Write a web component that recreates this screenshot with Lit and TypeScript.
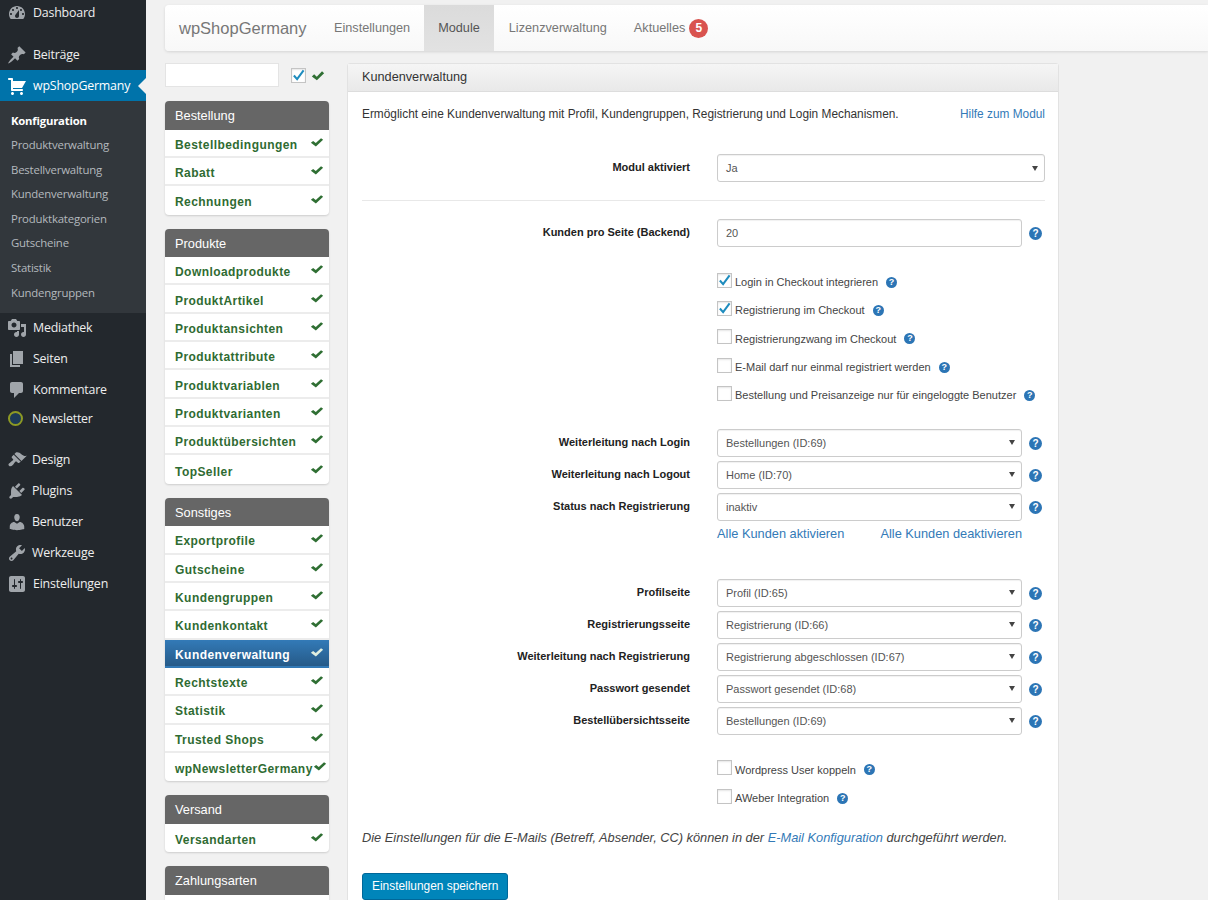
import { LitElement, html, css, svg } from 'lit';
import { customElement } from 'lit/decorators.js';

const ICONS: Record<string, string> = {
  dashboard:
    'M3.76 16h12.48c1.1-1.37 1.76-3.11 1.76-5 0-4.42-3.58-8-8-8s-8 3.58-8 8c0 1.89.66 3.63 1.76 5zM10 4c.55 0 1 .45 1 1s-.45 1-1 1-1-.45-1-1 .45-1 1-1zM6 6c.55 0 1 .45 1 1s-.45 1-1 1-1-.45-1-1 .45-1 1-1zm8 0c.55 0 1 .45 1 1s-.45 1-1 1-1-.45-1-1 .45-1 1-1zm-5.37 5.55L12 7v6c0 1.1-.9 2-2 2s-2-.9-2-2c0-.57.24-1.08.63-1.45zM4 10c.55 0 1 .45 1 1s-.45 1-1 1-1-.45-1-1 .45-1 1-1zm12 0c.55 0 1 .45 1 1s-.45 1-1 1-1-.45-1-1 .45-1 1-1z',
  pin: 'M10.44 3.02l1.82-1.82 6.36 6.35-1.83 1.82c-1.05-.68-2.48-.57-3.41.36l-.75.75c-.92.93-1.04 2.35-.35 3.41l-1.83 1.82-2.41-2.41-2.8 2.79c-.42.42-3.38 2.71-3.8 2.29s1.86-3.39 2.28-3.81l2.79-2.79L4.1 9.36l1.83-1.82c1.05.69 2.48.57 3.4-.36l.75-.75c.93-.92 1.05-2.35.36-3.41z',
  cart: 'M6 13h9c.55 0 1 .45 1 1s-.45 1-1 1H5c-.55 0-1-.45-1-1V4H2c-.55 0-1-.45-1-1s.45-1 1-1h3c.55 0 1 .45 1 1v2h13l-4 7H6v1zm-.5 3c.83 0 1.5.67 1.5 1.5S6.33 19 5.5 19 4 18.33 4 17.5 4.67 16 5.5 16zm9 0c.83 0 1.5.67 1.5 1.5s-.67 1.5-1.5 1.5-1.5-.67-1.5-1.5.67-1.5 1.5-1.5z',
  media:
    'M13 11V4c0-.55-.45-1-1-1h-1.67L9 1H5L3.67 3H2c-.55 0-1 .45-1 1v7c0 .55.45 1 1 1h10c.55 0 1-.45 1-1zM7 4.5c1.38 0 2.5 1.12 2.5 2.5S8.38 9.5 7 9.5 4.5 8.38 4.5 7 5.62 4.5 7 4.5zM14 6h5v10.5c0 1.38-1.12 2.5-2.5 2.5S14 17.88 14 16.5s1.12-2.5 2.5-2.5c.17 0 .34.02.5.05V9h-3V6zm-4 8.05V13h2v3.5c0 1.38-1.12 2.5-2.5 2.5S7 17.88 7 16.5 8.12 14 9.5 14c.17 0 .34.02.5.05z',
  pages: 'M6 15V2h10v13H6zm-1 1h8v2H3V5h2v11z',
  comments: 'M5 2h9c1.1 0 2 .9 2 2v7c0 1.1-.9 2-2 2h-2l-5 5v-5H5c-1.1 0-2-.9-2-2V4c0-1.1.9-2 2-2z',
  brush:
    'M14.48 11.06L7.41 3.99l1.5-1.5c.5-.56 2.3-.47 3.51.32 1.21.8 1.43 1.28 2.91 2.1 1.18.64 2.45 1.26 4.45.85zm-.71.71L6.7 4.7 4.93 6.47c-.39.39-.39 1.02 0 1.41l1.06 1.06c.39.39.39 1.03 0 1.42-.6.6-1.43 1.11-2.21 1.69-.35.26-.7.53-1.01.84C1.43 13.23.99 14.67 2 15.7c1 1 2.47.57 3.81-.76.31-.31.58-.66.84-1.01.58-.78 1.09-1.61 1.69-2.21.39-.39 1.03-.39 1.42 0l1.06 1.06c.39.39 1.02.39 1.41 0z',
  plugin:
    'M13.11 4.36L9.87 7.6 8 5.73l3.24-3.24c.35-.34 1.05-.2 1.56.32.52.51.66 1.21.31 1.55zm-8 1.77l.91-1.12 9.01 9.01-1.19.84c-.71.71-2.63 1.16-3.82 1.16H6.14L4.9 17.26c-.59.59-1.54.59-2.12 0-.59-.58-.59-1.53 0-2.12l1.24-1.24v-3.88c0-1.13.4-3.19 1.09-3.89zm7.26 3.97l3.24-3.24c.34-.35 1.04-.21 1.55.31.52.51.66 1.21.31 1.55l-3.24 3.25z',
  user: 'M10 9.25c-2.27 0-2.73-3.44-2.73-3.44C7 4.02 7.82 2 9.97 2c2.16 0 2.98 2.02 2.71 3.81 0 0-.41 3.44-2.68 3.44zm0 2.57L12.72 10c2.39 0 4.52 2.33 4.52 4.53v2.49s-3.65 1.13-7.24 1.13c-3.65 0-7.24-1.13-7.24-1.13v-2.49c0-2.25 1.94-4.48 4.47-4.48z',
  tools:
    'M16.68 9.77c-1.34 1.34-3.3 1.67-4.95.99l-5.41 6.52c-.99.99-2.59.99-3.58 0s-.99-2.59 0-3.57l6.52-5.42c-.68-1.65-.35-3.61.99-4.95 1.28-1.28 3.12-1.62 4.72-1.06l-2.89 2.89 2.82 2.82 2.86-2.87c.53 1.58.18 3.39-1.08 4.65zM3.81 16.21c.4.39 1.04.39 1.43 0 .4-.4.4-1.04 0-1.43-.39-.4-1.03-.4-1.43 0-.39.39-.39 1.03 0 1.43z',
  settings:
    'M18 16V4c0-1.1-.9-2-2-2H4c-1.1 0-2 .9-2 2v12c0 1.1.9 2 2 2h12c1.1 0 2-.9 2-2zM8 11h1c.55 0 1 .45 1 1s-.45 1-1 1H8v1.5c0 .28-.22.5-.5.5s-.5-.22-.5-.5V13H6c-.55 0-1-.45-1-1s.45-1 1-1h1V5.5c0-.28.22-.5.5-.5s.5.22.5.5V11zm5-2h-1c-.55 0-1-.45-1-1s.45-1 1-1h1V5.5c0-.28.22-.5.5-.5s.5.22.5.5V7h1c.55 0 1 .45 1 1s-.45 1-1 1h-1v5.5c0 .28-.22.5-.5.5s-.5-.22-.5-.5V9z',
};

const CHECK = 'M1 8.2l2.6-2.7 3 3L12.6 1.6 15 4 6.7 13.2z';

const groups: { title: string; items: string[] }[] = [
  { title: 'Bestellung', items: ['Bestellbedingungen', 'Rabatt', 'Rechnungen'] },
  {
    title: 'Produkte',
    items: ['Downloadprodukte', 'ProduktArtikel', 'Produktansichten', 'Produktattribute', 'Produktvariablen', 'Produktvarianten', 'Produktübersichten', 'TopSeller'],
  },
  {
    title: 'Sonstiges',
    items: ['Exportprofile', 'Gutscheine', 'Kundengruppen', 'Kundenkontakt', 'Kundenverwaltung', 'Rechtstexte', 'Statistik', 'Trusted Shops', 'wpNewsletterGermany'],
  },
  { title: 'Versand', items: ['Versandarten'] },
];

const subItems = ['Produktverwaltung', 'Bestellverwaltung', 'Kundenverwaltung', 'Produktkategorien', 'Gutscheine', 'Statistik', 'Kundengruppen'];

const icon = (name: string) => html`<svg class="mi" viewBox="0 0 20 20">${svg`<path d=${ICONS[name]}></path>`}</svg>`;
const check = () => html`<svg class="ok" viewBox="0 0 16 14" preserveAspectRatio="none">${svg`<path d=${CHECK}></path>`}</svg>`;
const tick = () => html`<svg class="tick" viewBox="0 0 14 13">${svg`<polyline points="2,7 5.5,11 12.5,1.5"></polyline>`}</svg>`;
const help = () => html`<span class="help">?</span>`;

@customElement('app-root')
export class AppRoot extends LitElement {
  static styles = css`
    :host {
      display: flex;
      height: 900px;
      overflow: hidden;
      background: #f1f1f1;
      font-family: 'Liberation Sans', Arial, sans-serif;
      font-size: 12px;
      color: #333;
    }

    /* wp admin menu */
    .side {
      width: 146px;
      flex: none;
      background: #23282d;
      font-family: 'Open Sans', sans-serif;
      font-size: 12.4px;
      letter-spacing: -0.2px;
      color: #eee;
    }
    .mitem {
      height: 31px;
      box-sizing: border-box;
      padding: 0 0 1px 7px;
      display: flex;
      align-items: center;
      gap: 6px;
      position: relative;
    }
    .mitem .mi {
      margin-top: 1px;
    }
    .mitem.first {
      height: 26px;
      margin-bottom: 13px;
    }
    .mitem.short {
      height: 26px;
      margin-bottom: 13px;
      gap: 7px;
    }
    .mitem.tight {
      gap: 5px;
    }
    .mitem.cur {
      background: #0073aa;
      color: #fff;
    }
    .mitem.cur .mi {
      fill: #fff;
    }
    .mitem.cur::after {
      content: '';
      position: absolute;
      right: 0;
      top: 8px;
      border: 8px solid transparent;
      border-right-color: #f1f1f1;
      border-left: 0;
    }
    .mi {
      width: 20px;
      height: 20px;
      flex: none;
      fill: #a0a5aa;
    }
    .ring {
      width: 15px;
      height: 15px;
      margin: 0 2px 0 1px;
      flex: none;
      box-sizing: border-box;
      border: 2px solid #8d9a24;
      border-radius: 50%;
      background: #1d3a57;
    }
    .sub {
      background: #32373c;
      padding: 7.5px 0 7.5px;
      font-size: 11.4px;
      color: #b4b9be;
    }
    .sub div {
      height: 24.6px;
      line-height: 24.6px;
      padding-left: 11px;
    }
    .sub .on {
      color: #fff;
      font-weight: 700;
      font-size: 11.3px;
    }

    .main {
      flex: 1;
      min-width: 0;
      padding: 5px 0 0 19px;
    }

    /* top nav */
    .nav {
      height: 46px;
      display: flex;
      align-items: stretch;
      background: linear-gradient(#fff, #f8f8f8);
      border-radius: 4px 0 0 4px;
      box-shadow: 0 1px 3px rgba(0, 0, 0, 0.12);
      color: #777;
      font-size: 12.7px;
    }
    .brand {
      font-size: 16.5px;
      line-height: 46px;
      padding: 0 14px;
      width: 127px;
      white-space: nowrap;
    }
    .tab {
      line-height: 46px;
      padding: 0 14px;
      white-space: nowrap;
      display: flex;
      align-items: center;
    }
    .tab.on {
      background: linear-gradient(#dbdbdb, #e2e2e2);
      color: #555;
    }
    .tab.gap {
      margin: 0 -1px 0 1px;
    }
    .badge {
      width: 19px;
      height: 19px;
      line-height: 19px;
      border-radius: 50%;
      background: #d9534f;
      color: #fff;
      font-weight: 700;
      font-size: 12px;
      text-align: center;
      margin-left: 4px;
    }

    .cols {
      display: flex;
      gap: 18px;
      margin-top: 12px;
    }

    /* left module list */
    .mods {
      width: 164px;
      flex: none;
    }
    .filter {
      display: flex;
      align-items: center;
      height: 24px;
      margin-bottom: 14.3px;
    }
    .filter .field {
      width: 114px;
      height: 24px;
      box-sizing: border-box;
      background: #fff;
      border: 1px solid #e4e4e4;
    }
    .filter .cb {
      margin: 0 5px 0 12px;
    }
    .filter .ok {
      width: 14px;
      height: 11px;
    }
    .group {
      margin-bottom: 14.2px;
      border-radius: 4px;
      box-shadow: 0 1px 2px rgba(0, 0, 0, 0.15);
      background: #fff;
    }
    .ghead {
      height: 28.33px;
      line-height: 29px;
      padding-left: 10px;
      background: #666;
      color: #fff;
      font-size: 12.8px;
      border-radius: 4px 4px 0 0;
    }
    .gitem {
      height: 28.33px;
      box-sizing: border-box;
      display: flex;
      align-items: center;
      padding: 0 5px 0 10px;
      border-bottom: 2px solid #ececec;
      color: #2f6b32;
      font-weight: 700;
      font-size: 12px;
      letter-spacing: 0.44px;
      white-space: nowrap;
    }
    .gitem:last-child {
      border-bottom: 0;
    }
    .gitem span {
      padding-top: 4px;
    }
    .gitem .ok {
      margin-left: auto;
      flex: none;
      margin-top: -2px;
    }
    .gitem.on {
      background: linear-gradient(#337ab7, #265a88);
      color: #fff;
      border-bottom-color: transparent;
    }
    .gitem.on .ok {
      fill: #dfeee0;
    }
    .ok {
      width: 14px;
      height: 10px;
      fill: #2f6f33;
    }

    /* right panel */
    .panel {
      width: 712px;
      flex: none;
      box-sizing: border-box;
      background: #fff;
      border: 1px solid #e2e2e2;
      border-radius: 3px 3px 0 0;
      height: 900px;
    }
    .phead {
      height: 27px;
      line-height: 27px;
      padding-left: 14px;
      background: linear-gradient(#f5f5f5, #e9e9e9);
      border-bottom: 1px solid #ddd;
      color: #333;
      font-size: 12.7px;
    }
    .pbody {
      padding: 14px 13px 0 14px;
    }
    .intro {
      display: flex;
      justify-content: space-between;
      line-height: 17px;
      margin-bottom: 31px;
      color: #333;
      font-size: 11.87px;
    }
    a {
      color: #337ab7;
      text-decoration: none;
    }
    .row {
      display: grid;
      grid-template-columns: 355px 305px 23px;
      align-items: center;
      height: 28px;
    }
    .rows {
      display: flex;
      flex-direction: column;
      gap: 4px;
    }
    .lbl {
      text-align: right;
      font-weight: 700;
      font-size: 11px;
      color: #222;
      padding: 0 27px 2px 0;
    }
    .ctl {
      height: 28px;
      box-sizing: border-box;
      border: 1px solid #ccc;
      border-radius: 3px;
      box-shadow: inset 0 1px 1px rgba(0, 0, 0, 0.06);
      padding-left: 8px;
      display: flex;
      align-items: center;
      color: #555;
      background: #fff;
      font-size: 11px;
    }
    .ctl.wide {
      grid-column: 2 / 4;
    }
    .caret {
      margin-left: auto;
      margin-right: 6px;
      border: 3px solid transparent;
      border-top: 5px solid #444;
      border-bottom: 0;
    }
    .help {
      display: inline-block;
      width: 11px;
      height: 11px;
      line-height: 11px;
      border-radius: 50%;
      background: #2c75b5;
      color: #fff;
      font-size: 9px;
      font-weight: 700;
      text-align: center;
    }
    .row .help {
      width: 13px;
      height: 13px;
      line-height: 13px;
      font-size: 10px;
      margin: 1px 0 0 7px;
    }
    hr {
      border: 0;
      border-top: 1px solid #e8e8e8;
      margin: 18px 0;
    }
    .checks {
      margin: 21px 0 19px 355px;
    }
    .checks.last {
      margin-bottom: 0;
    }
    .chk {
      height: 28.33px;
      display: flex;
      align-items: center;
      color: #444;
      font-size: 11px;
      white-space: nowrap;
    }
    .cb {
      width: 15px;
      height: 15px;
      flex: none;
      box-sizing: border-box;
      border: 1px solid #c4c4c4;
      background: #fff;
      box-shadow: inset 0 1px 2px rgba(0, 0, 0, 0.1);
      margin: -4px 3px 0 0;
      display: flex;
      align-items: center;
      justify-content: center;
    }
    .tick {
      width: 13px;
      height: 12px;
      flex: none;
      fill: none;
      stroke: #1e8cbe;
      stroke-width: 2.2;
    }
    .chk .help {
      margin-left: 8px;
    }
    .links {
      display: flex;
      justify-content: space-between;
      width: 305px;
      margin: 5px 0 37px 355px;
      font-size: 12.8px;
      line-height: 16px;
    }
    .note {
      font-style: italic;
      font-size: 12.8px;
      line-height: 17px;
      margin: 17px 0 27px;
      color: #444;
    }
    .save {
      display: inline-block;
      height: 27px;
      line-height: 25px;
      box-sizing: border-box;
      padding: 0 9px;
      width: 146px;
      background: #0085ba;
      border: 1px solid #006799;
      border-radius: 3px;
      color: #fff;
      white-space: nowrap;
      font-size: 11.9px;
    }
  `;

  private sel(label: string, value: string) {
    return html`<div class="row">
      <div class="lbl">${label}</div>
      <div class="ctl">${value}<i class="caret"></i></div>
      ${help()}
    </div>`;
  }

  private chk(label: string, on = false) {
    return html`<div class="chk">
      <span class="cb">${on ? tick() : ''}</span>
      ${label}${help()}
    </div>`;
  }

  render() {
    return html`
      <nav class="side">
        <div class="mitem first">${icon('dashboard')}Dashboard</div>
        <div class="mitem">${icon('pin')}Beiträge</div>
        <div class="mitem cur">${icon('cart')}wpShopGermany</div>
        <div class="sub">
          <div class="on">Konfiguration</div>
          ${subItems.map((s) => html`<div>${s}</div>`)}
        </div>
        <div class="mitem">${icon('media')}Mediathek</div>
        <div class="mitem">${icon('pages')}Seiten</div>
        <div class="mitem">${icon('comments')}Kommentare</div>
        <div class="mitem short"><span class="ring"></span>Newsletter</div>
        <div class="mitem tight">${icon('brush')}Design</div>
        <div class="mitem tight">${icon('plugin')}Plugins</div>
        <div class="mitem tight">${icon('user')}Benutzer</div>
        <div class="mitem tight">${icon('tools')}Werkzeuge</div>
        <div class="mitem">${icon('settings')}Einstellungen</div>
      </nav>

      <div class="main">
        <div class="nav">
          <div class="brand">wpShopGermany</div>
          <div class="tab">Einstellungen</div>
          <div class="tab on">Module</div>
          <div class="tab gap">Lizenzverwaltung</div>
          <div class="tab">Aktuelles<span class="badge">5</span></div>
        </div>

        <div class="cols">
          <div class="mods">
            <div class="filter">
              <div class="field"></div>
              <span class="cb">${tick()}</span>
              ${check()}
            </div>
            ${groups.map(
              (g) => html`<div class="group">
                <div class="ghead">${g.title}</div>
                ${g.items.map(
                  (i) => html`<div class="gitem ${i === 'Kundenverwaltung' ? 'on' : ''}">
                    <span>${i}</span>${check()}
                  </div>`
                )}
              </div>`
            )}
            <div class="group"><div class="ghead">Zahlungsarten</div><div class="gitem"></div></div>
          </div>

          <div class="panel">
            <div class="phead">Kundenverwaltung</div>
            <div class="pbody">
              <div class="intro">
                <span>Ermöglicht eine Kundenverwaltung mit Profil, Kundengruppen, Registrierung und Login Mechanismen.</span>
                <a>Hilfe zum Modul</a>
              </div>
              <div class="row">
                <div class="lbl">Modul aktiviert</div>
                <div class="ctl wide">Ja<i class="caret"></i></div>
              </div>
              <hr />
              <div class="row">
                <div class="lbl">Kunden pro Seite (Backend)</div>
                <div class="ctl">20</div>
                ${help()}
              </div>
              <div class="checks">
                ${this.chk('Login in Checkout integrieren', true)}
                ${this.chk('Registrierung im Checkout', true)}
                ${this.chk('Registrierungzwang im Checkout')}
                ${this.chk('E-Mail darf nur einmal registriert werden')}
                ${this.chk('Bestellung und Preisanzeige nur für eingeloggte Benutzer')}
              </div>
              <div class="rows">
                ${this.sel('Weiterleitung nach Login', 'Bestellungen (ID:69)')}
                ${this.sel('Weiterleitung nach Logout', 'Home (ID:70)')}
                ${this.sel('Status nach Registrierung', 'inaktiv')}
              </div>
              <div class="links"><a>Alle Kunden aktivieren</a><a>Alle Kunden deaktivieren</a></div>
              <div class="rows">
                ${this.sel('Profilseite', 'Profil (ID:65)')}
                ${this.sel('Registrierungsseite', 'Registrierung (ID:66)')}
                ${this.sel('Weiterleitung nach Registrierung', 'Registrierung abgeschlossen (ID:67)')}
                ${this.sel('Passwort gesendet', 'Passwort gesendet (ID:68)')}
                ${this.sel('Bestellübersichtsseite', 'Bestellungen (ID:69)')}
              </div>
              <div class="checks last">
                ${this.chk('Wordpress User koppeln')}
                ${this.chk('AWeber Integration')}
              </div>
              <p class="note">
                Die Einstellungen für die E-Mails (Betreff, Absender, CC) können in der <a>E-Mail Konfiguration</a> durchgeführt werden.
              </p>
              <a class="save">Einstellungen speichern</a>
            </div>
          </div>
        </div>
      </div>
    `;
  }
}
